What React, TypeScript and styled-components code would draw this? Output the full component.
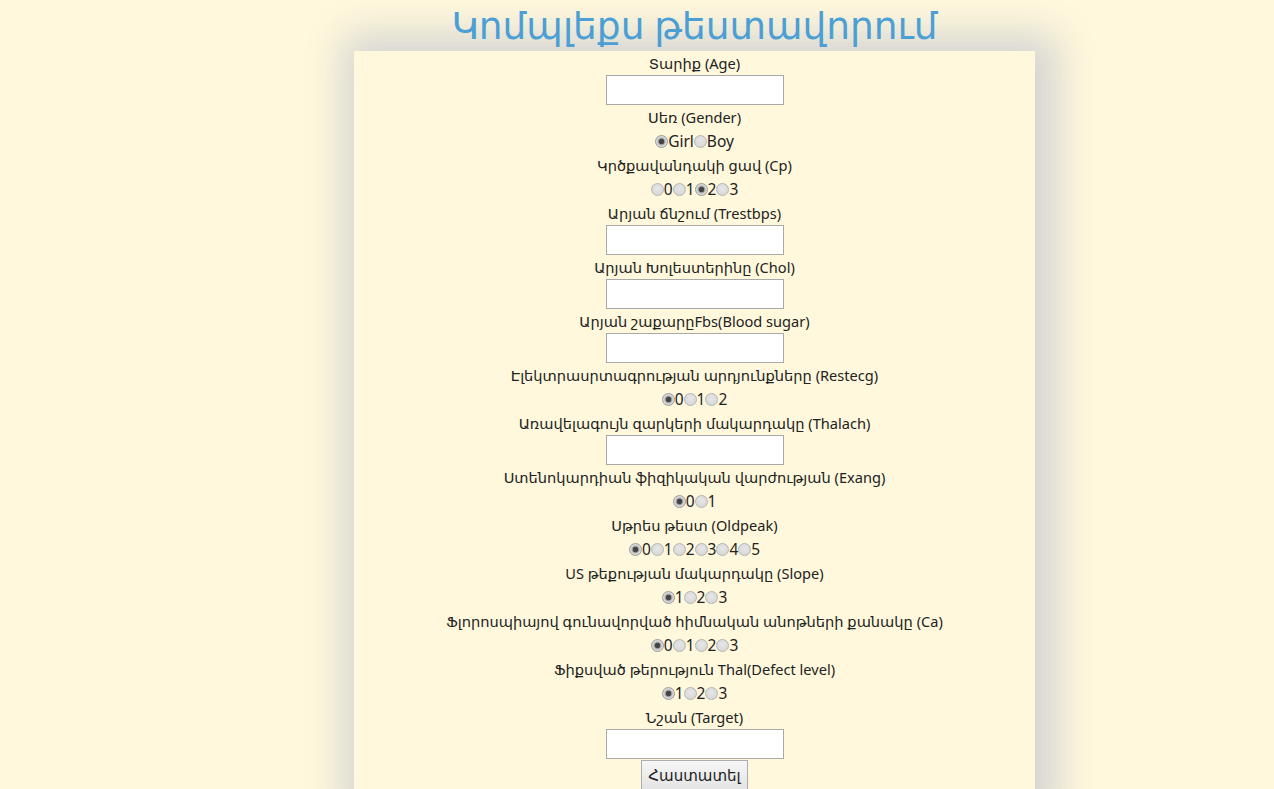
import React from "react";
import styled, { createGlobalStyle } from "styled-components";

const Global = createGlobalStyle`
  html, body {
    margin: 0;
    padding: 0;
    background: #fff8dc;
  }
  body {
    font-family: "Segoe UI", "Noto Sans", "DejaVu Sans", sans-serif;
    color: #222;
  }
`;

const Column = styled.div`
  width: 681px;
  margin-left: 354px;
`;

const Title = styled.h1`
  margin: 0;
  height: 51px;
  line-height: 49px;
  font-size: 37.5px;
  font-weight: 400;
  text-align: center;
  color: #4b9fd5;
  position: relative;
  z-index: 1;
  white-space: nowrap;
`;

const Panel = styled.form`
  display: flex;
  flex-direction: column;
  align-items: center;
  background: #fff8dc;
  box-shadow: 6px 0 38px 16px #d3d3d3;
  min-height: 760px;
  font-size: 14.6px;
  line-height: 24px;
`;

const Label = styled.div`
  height: 24px;
  text-align: center;
  white-space: nowrap;
`;

const TextInput = styled.input`
  box-sizing: border-box;
  width: 178px;
  height: 30px;
  margin: 0;
  border: 1px solid #a9a9a9;
  background: #fff;
  font: inherit;
`;

const Group = styled.div`
  display: flex;
  align-items: center;
  height: 24px;
  font-size: 15.5px;
`;

const Option = styled.label`
  display: inline-flex;
  align-items: center;
`;

const Radio = styled.input.attrs({ type: "radio" })`
  appearance: none;
  -webkit-appearance: none;
  box-sizing: border-box;
  width: 13px;
  height: 13px;
  margin: 0;
  border-radius: 50%;
  border: 1px solid #b4b4b4;
  background: radial-gradient(circle at 50% 40%, #e6e6e6 0%, #d4d4d4 100%);
  &:checked {
    background: radial-gradient(circle, #444 0 2.5px, #9a9a9a 3px, #d8d8d8 4.5px, #e2e2e2 100%);
    border-color: #9a9a9a;
  }
`;

const Submit = styled.button`
  margin-top: 1px;
  height: 30px;
  padding: 0 6px;
  font: inherit;
  font-size: 15px;
  color: #222;
  border: 1px solid #adadad;
  border-radius: 0;
  background: linear-gradient(#f6f6f6, #e4e4e4);
`;

type RadioField = { label: string; name: string; options: string[]; checked: number };
type TextField = { label: string; name: string };

const RadioRow = ({ label, name, options, checked }: RadioField) => (
  <>
    <Label>{label}</Label>
    <Group>
      {options.map((o, i) => (
        <Option key={o}>
          <Radio name={name} defaultChecked={i === checked} />
          {o}
        </Option>
      ))}
    </Group>
  </>
);

const InputRow = ({ label, name }: TextField) => (
  <>
    <Label>{label}</Label>
    <TextInput name={name} type="text" />
  </>
);

export default function App() {
  return (
    <>
      <Global />
      <Column>
        <Title>Կոմպլեքս թեստավորում</Title>
        <Panel onSubmit={(e) => e.preventDefault()}>
          <InputRow label="Տարիք (Age)" name="age" />
          <RadioRow label="Սեռ (Gender)" name="gender" options={["Girl", "Boy"]} checked={0} />
          <RadioRow label="Կրծքավանդակի ցավ (Cp)" name="cp" options={["0", "1", "2", "3"]} checked={2} />
          <InputRow label="Արյան ճնշում (Trestbps)" name="trestbps" />
          <InputRow label="Արյան Խոլեստերինը (Chol)" name="chol" />
          <InputRow label="Արյան շաքարըFbs(Blood sugar)" name="fbs" />
          <RadioRow label="Էլեկտրասրտագրության արդյունքները (Restecg)" name="restecg" options={["0", "1", "2"]} checked={0} />
          <InputRow label="Առավելագույն զարկերի մակարդակը (Thalach)" name="thalach" />
          <RadioRow label="Ստենոկարդիան ֆիզիկական վարժության (Exang)" name="exang" options={["0", "1"]} checked={0} />
          <RadioRow label="Սթրես թեստ (Oldpeak)" name="oldpeak" options={["0", "1", "2", "3", "4", "5"]} checked={0} />
          <RadioRow label="US թեքության մակարդակը (Slope)" name="slope" options={["1", "2", "3"]} checked={0} />
          <RadioRow label="Ֆլորոսպիայով գունավորված հիմնական անոթների քանակը (Ca)" name="ca" options={["0", "1", "2", "3"]} checked={0} />
          <RadioRow label="Ֆիքսված թերություն Thal(Defect level)" name="thal" options={["1", "2", "3"]} checked={0} />
          <InputRow label="Նշան (Target)" name="target" />
          <Submit type="submit">Հաստատել</Submit>
        </Panel>
      </Column>
    </>
  );
}
